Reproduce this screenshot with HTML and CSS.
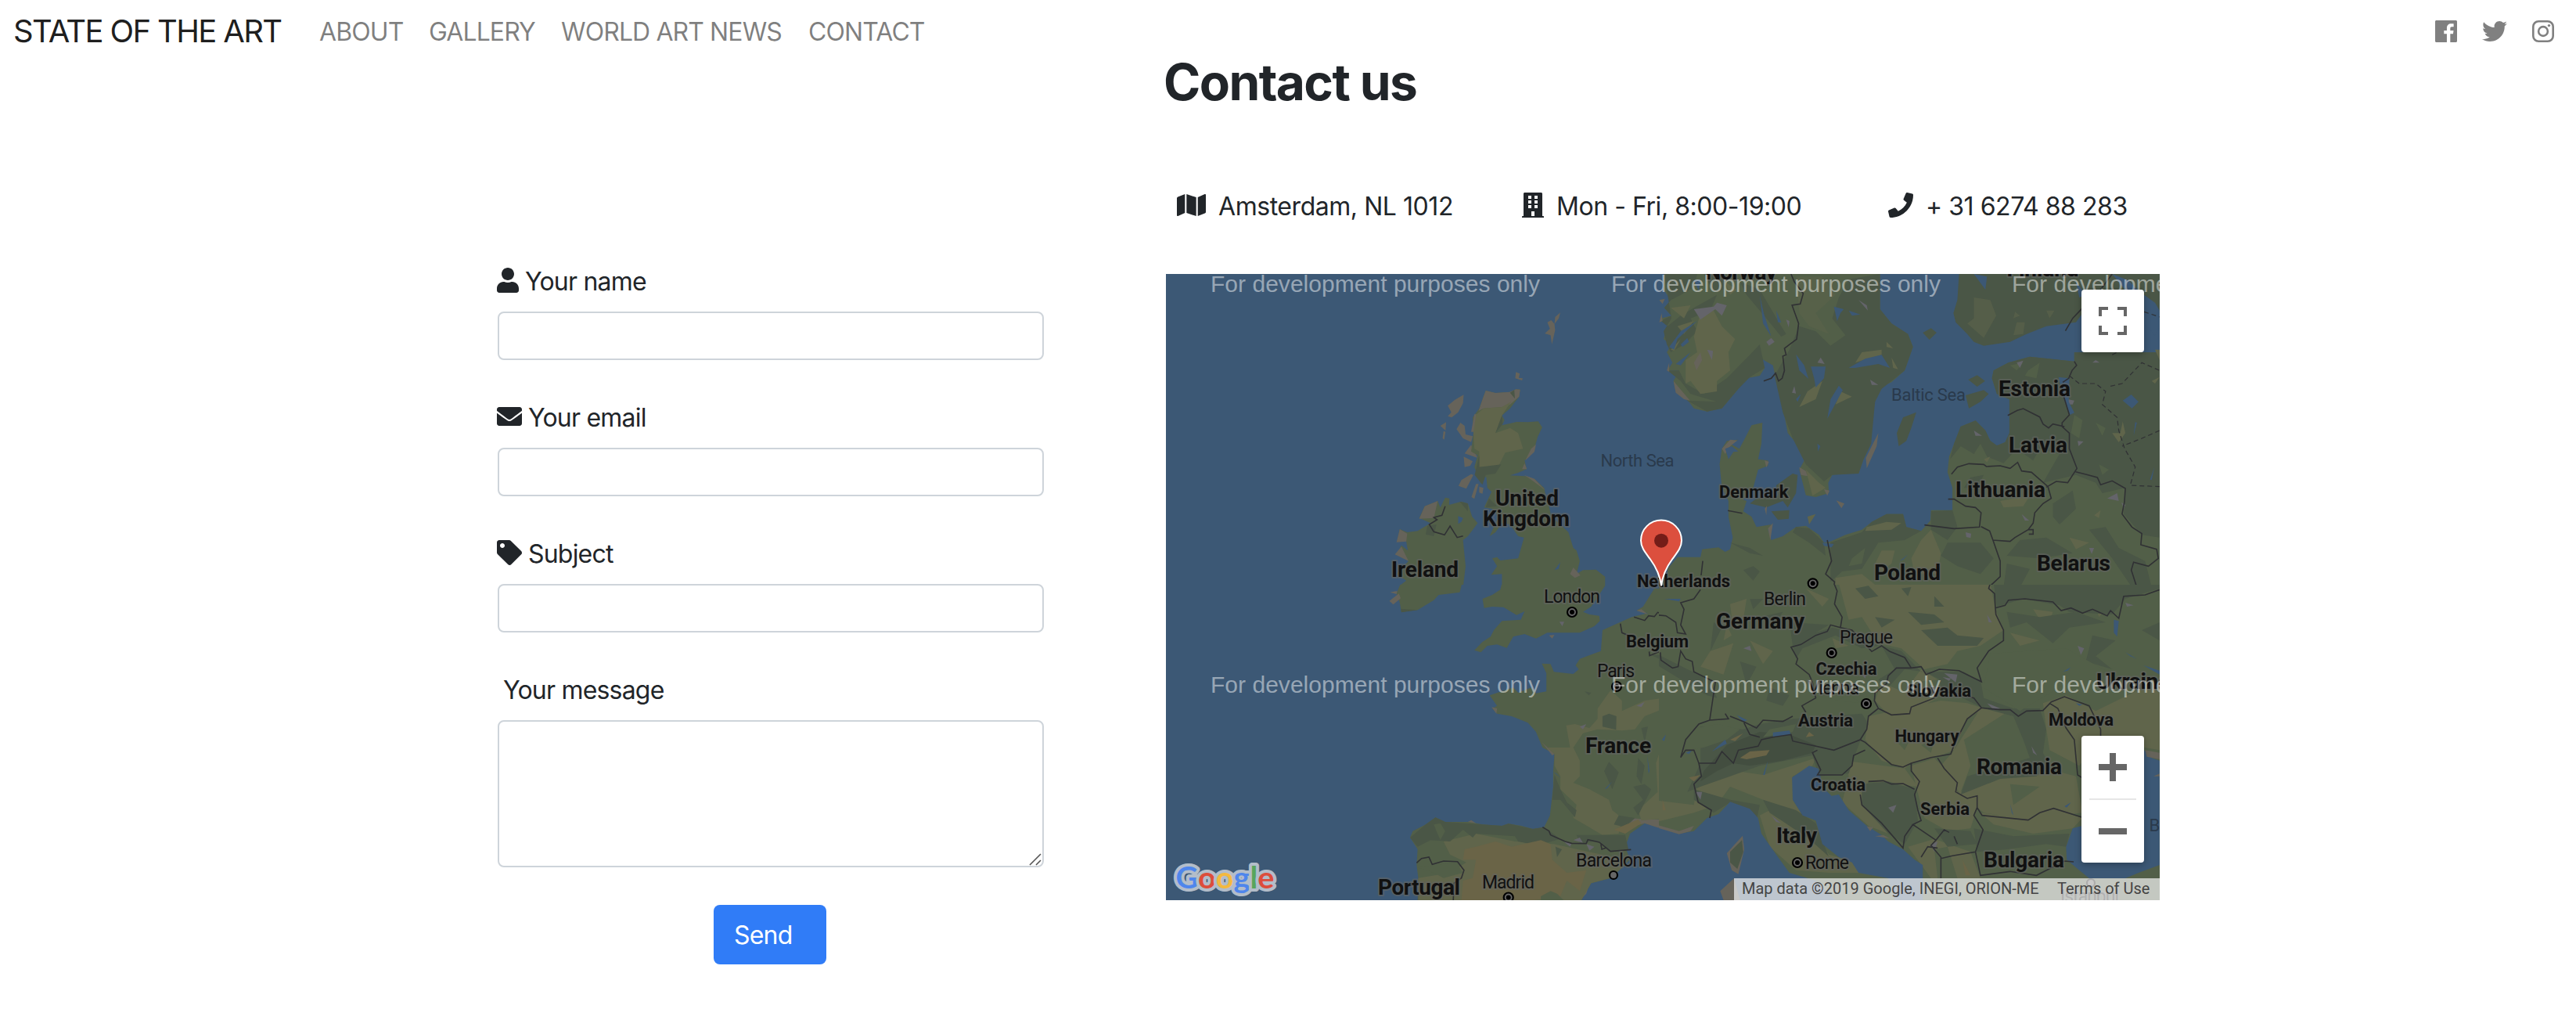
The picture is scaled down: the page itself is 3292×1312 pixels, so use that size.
FILE: index.html
```html
<!DOCTYPE html>
<html lang="en">
<head>
<meta charset="utf-8">
<title>State of the Art - Contact</title>
<link rel="stylesheet" href="styles.css">
</head>
<body>
<nav class="navbar">
  <a class="brand">STATE OF THE ART</a>
  <ul class="nav-links">
    <li class="l-about">ABOUT</li><li class="l-gallery">GALLERY</li><li class="l-news">WORLD ART NEWS</li><li class="l-contact">CONTACT</li>
  </ul>
  <div class="social">
    <svg width="28" height="28" viewBox="0 32 448 448"><path d="M448 56.7v398.5c0 13.7-11.1 24.7-24.7 24.7H309.1V306.5h58.2l8.7-67.6h-67v-43.2c0-19.6 5.4-32.9 33.5-32.9h35.8v-60.5c-6.2-.8-27.4-2.7-52.2-2.7-51.6 0-87 31.5-87 89.4v49.9h-58.4v67.6h58.4V480H24.7C11.1 480 0 468.9 0 455.3V56.7C0 43.1 11.1 32 24.7 32h398.5c13.7 0 24.8 11.1 24.8 24.7z"/></svg>
    <svg width="32" height="32" viewBox="0 0 512 512"><path d="M459.37 151.716c.325 4.548.325 9.097.325 13.645 0 138.72-105.583 298.558-298.558 298.558-59.452 0-114.68-17.219-161.137-47.106 8.447.974 16.568 1.299 25.34 1.299 49.055 0 94.213-16.568 130.274-44.832-46.132-.975-84.792-31.188-98.112-72.772 6.498.974 12.995 1.624 19.818 1.624 9.421 0 18.843-1.3 27.614-3.573-48.081-9.747-84.143-51.98-84.143-102.985v-1.299c13.969 7.797 30.214 12.67 47.431 13.319-28.264-18.843-46.781-51.005-46.781-87.391 0-19.492 5.197-37.36 14.294-52.954 51.655 63.675 129.3 105.258 216.365 109.807-1.624-7.797-2.599-15.918-2.599-24.04 0-57.828 46.782-104.934 104.934-104.934 30.213 0 57.502 12.67 76.67 33.137 23.715-4.548 46.456-13.32 66.599-25.34-7.798 24.366-24.366 44.833-46.132 57.827 21.117-2.273 41.584-8.122 60.426-16.243-14.292 20.791-32.161 39.308-52.628 54.253z"/></svg>
    <svg width="28" height="28" viewBox="0 0 28 28"><rect x="1.3" y="1.3" width="25.4" height="25.4" rx="6.8" class="ring"/><circle cx="14" cy="14" r="5.9" class="ring"/><circle cx="21.5" cy="6.6" r="1.7"/></svg>
  </div>
</nav>
<main class="page">
  <form class="form">
    <div class="field">
      <label><svg width="28" height="32" viewBox="0 0 448 512"><path d="M224 256c70.7 0 128-57.3 128-128S294.7 0 224 0 96 57.3 96 128s57.3 128 128 128zm89.6 32h-16.7c-22.2 10.2-46.9 16-72.9 16s-50.6-5.8-72.9-16h-16.7C60.2 288 0 348.2 0 422.4V464c0 26.5 21.5 48 48 48h352c26.5 0 48-21.5 48-48v-41.6c0-74.2-60.2-134.4-134.4-134.4z"/></svg><span>Your name</span></label>
      <input type="text">
    </div>
    <div class="field">
      <label><svg width="32" height="32" viewBox="0 0 512 512"><path d="M502.3 190.8c3.9-3.1 9.7-.2 9.7 4.7V400c0 26.5-21.5 48-48 48H48c-26.5 0-48-21.5-48-48V195.6c0-5 5.7-7.8 9.7-4.7 22.4 17.4 52.1 39.5 154.1 113.6 21.1 15.4 56.7 47.8 92.2 47.6 35.7.3 72-32.8 92.3-47.6 102-74.1 131.6-96.3 154-113.7zM256 320c23.2.4 56.6-29.2 73.4-41.4 132.7-96.3 142.8-104.7 173.4-128.7 5.8-4.5 9.2-11.5 9.2-18.9v-19c0-26.5-21.5-48-48-48H48c-26.5 0-48 21.5-48 48v19c0 7.4 3.4 14.3 9.2 18.9 30.6 23.9 40.7 32.4 173.4 128.7 16.8 12.2 50.2 41.8 73.4 41.4z"/></svg><span>Your email</span></label>
      <input type="text">
    </div>
    <div class="field">
      <label><svg width="32" height="32" viewBox="0 0 512 512"><path d="M0 252.118V48C0 21.49 21.49 0 48 0h204.118a48 48 0 0 1 33.941 14.059l211.882 211.882c18.745 18.745 18.745 49.137 0 67.882L293.823 497.941c-18.745 18.745-49.137 18.745-67.882 0L14.059 286.059A48 48 0 0 1 0 252.118zM112 64c-26.51 0-48 21.49-48 48s21.49 48 48 48 48-21.49 48-48-21.49-48-48-48z"/></svg><span>Subject</span></label>
      <input type="text">
    </div>
    <div class="field message">
      <label><span>Your message</span></label>
      <div class="area"><textarea></textarea>
        <svg class="grip" width="16" height="16" viewBox="0 0 16 16"><path d="M1 15 15 1M9 15l6-6"/></svg></div>
    </div>
    <button type="button" class="send">Send</button>
  </form>

  <section class="info">
    <h1>Contact us</h1>
    <ul class="facts">
      <li class="f-place"><svg width="37" height="32" viewBox="0 0 576 512" preserveAspectRatio="none"><path d="M0 117.66v346.32c0 11.32 11.43 19.06 21.94 14.86L160 416V32L20.12 87.95A32.006 32.006 0 0 0 0 117.66zM192 416l192 64V96L192 32v384zM554.06 33.16L416 96v384l139.88-55.95A31.996 31.996 0 0 0 576 394.34V48.02c0-11.32-11.43-19.06-21.94-14.86z"/></svg><span>Amsterdam, NL 1012</span></li>
      <li class="f-hours"><svg width="28" height="32" viewBox="0 0 448 512"><path fill-rule="evenodd" d="M436 480h-20V24c0-13.255-10.745-24-24-24H56C42.745 0 32 10.745 32 24v456H12c-6.627 0-12 5.373-12 12v20h448v-20c0-6.627-5.373-12-12-12zM128 64h64v64h-64zM256 64h64v64h-64zM128 160h64v64h-64zM256 160h64v64h-64zM128 256h64v64h-64zM256 256h64v64h-64zM192 384h64v96h-64z"/></svg><span>Mon - Fri, 8:00-19:00</span></li>
      <li class="f-phone"><svg width="32" height="32" viewBox="0 0 512 512"><path d="M493.4 24.6l-104-24c-11.3-2.6-22.9 3.3-27.5 13.9l-48 112c-4.2 9.8-1.4 21.3 6.9 28l60.6 49.6c-36 76.7-98.9 140.5-177.2 177.2l-49.6-60.6c-6.8-8.3-18.2-11.1-28-6.9l-112 48C3.9 366.5-2 378.1.6 389.4l24 104C27.1 504.2 36.7 512 48 512c256.1 0 464-207.5 464-464 0-11.2-7.7-20.9-18.6-23.4z"/></svg><span>+ 31 6274 88 283</span></li>
    </ul>
    <div class="map">
      <svg class="map-canvas" width="1270" height="800" viewBox="1490 350 1270 800">
        <!-- north-west tile -->
        <svg x="1490" y="350" width="630" height="397" viewBox="24.1 30 1519.8 1191" preserveAspectRatio="none">
          <path class="tan" d="M1240 178 1235 200 1222 222 1224 245 1214 300 1210 265 1192 258 1208 240 1200 215 1212 207 1222 222 1224 195ZM1103 406 1115 412 1112 428 1124 430 1122 438 1101 430ZM942 493 940 525 925 560 905 580 893 575 904 560 893 535 915 512ZM888 598 886 630 870 612ZM880 632 886 635 882 665 877 660ZM932 600 945 612 948 645 970 652 965 674 940 660 920 625ZM965 685 985 735 945 718ZM942 730 970 748 962 765 945 770ZM965 797 972 800 950 853 926 842 935 820ZM980 835 988 835 975 892 966 885ZM990 845 1003 850 1000 872 990 868Z"/>
          <path class="green" d="M1010 477 1040 486 1085 482 1103 472 1116 473 1113 500 1085 545 1060 572 1068 590 1060 610 1105 597 1140 598 1172 595 1184 618 1170 655 1160 700 1145 730 1130 745 1136 778 1110 792 1085 802 1130 805 1160 815 1190 850 1195 880 1205 920 1212 960 1240 990 1265 1020 1280 1080 1290 1090 1300 1130 1290 1180 1310 1165 1350 1163 1378 1190 1378 1231 1060 1231 1060 1180 1027 1183 1045 1150 1030 1120 1045 1115 1055 1128 1110 1120 1128 1040 1110 1035 1085 990 1060 985 1040 1020 1022 1035 1035 1000 1050 960 1030 930 1005 925 1028 865 1015 850 1012 810 1000 800 995 835 985 800 975 770 985 725 965 710 972 640 970 580 990 545 1003 500Z"/>
          <path class="tan" d="M1010 477 1040 486 1085 482 1103 472 1116 473 1113 500 1085 530 1060 540 1003 545 988 555 1003 500ZM975 568 995 568 980 600 978 635 965 635ZM1165 683 1160 712 1132 745 1150 700ZM1128 800 1160 815 1195 860 1150 818ZM1280 1155 1302 1185 1285 1195 1270 1180ZM1130 755 1137 778 1122 778Z"/>
          <path class="olive" d="M1003 545 1060 540 1088 520 1060 572 1040 640 1085 620 1110 640 1125 700 1070 715 1050 765 990 770 990 710 975 700 972 640 980 570Z"/>
          <path class="dark" d="M1085 485 1098 475 1100 508ZM1060 572 1062 605 1040 640ZM990 770 1058 760 1040 795 1010 800 1000 838 976 800 990 725ZM1020 890 1045 920 1010 925Z"/>
          <path class="green" d="M885 887 898 890 897 915 935 902 955 910 968 960 985 985 970 1010 955 1035 940 1050 948 1150 940 1231 738 1231 765 1205 735 1180 772 1130 735 1105 750 1070 770 1090 765 1055 737 1055 745 1008 768 1020 800 1015 840 985 805 965 822 920 862 900 870 925Z"/>
          <path class="tan" d="M862 900 850 965 805 968 822 920ZM745 1008 768 1025 765 1055 735 1058ZM750 1075 772 1130 730 1105Z"/>
          <path class="dark" d="M930 902 955 910 955 940ZM830 995 858 990 850 1035 825 1028Z"/>
          <path class="water" d="M925 958 940 965 935 980 925 988ZM1222 1165 1240 1135 1235 1160Z"/>
          <path class="border" d="M885 920 875 955 850 963 860 972 836 990 850 1018 883 1030 900 996 922 1040 940 1034"/>
        </svg>
        <!-- north-east tile -->
        <svg x="2120" y="350" width="640" height="397" viewBox="23.8 30 1520.5 1191" preserveAspectRatio="none">
          <path class="green" d="M40 30 38 90 60 130 40 160 62 190 30 200 50 230 38 280 62 300 48 330 65 370 50 400 85 400 68 440 75 480 115 520 130 545 170 557 215 545 265 470 290 430 330 420 345 390 335 355 370 380 385 470 400 540 415 640 435 670 455 700 465 745 450 780 470 878 500 885 540 870 538 830 550 800 600 790 630 795 645 740 668 680 668 600 680 520 685 470 730 445 770 400 795 310 780 260 730 220 695 165 695 30Z"/>
          <path class="dark" d="M375 420 420 320 450 230 500 250 545 305 590 265 550 200 570 120 600 50 695 30 695 165 730 220 780 260 795 310 770 400 700 470 680 520 668 680 645 740 630 795 550 800 525 825 470 760 430 660 400 560ZM40 30 140 30 130 80 90 110 60 130 40 160 62 190 30 210 50 230 90 190 130 160 200 110 180 170 120 200 140 250 100 300 60 330 48 300 38 250 62 200ZM50 400 85 400 105 450 160 490 230 430 300 340 330 300 345 390 300 425 265 470 215 545 170 557 110 515 200 520 120 490 90 440ZM270 60 330 90 390 220 410 260 395 270 350 200 290 110ZM160 30 230 30 220 90 190 100Z"/>
          <path class="olive" d="M150 180 190 170 215 230 255 280 235 330 240 400 200 440 200 480 150 490 120 440 105 450 105 360 140 330 130 270ZM60 160 120 150 100 200ZM80 230 130 210 100 260ZM90 280 70 325 60 320ZM640 330 700 320 700 340 620 370ZM475 480 520 440 500 510 450 540ZM575 480 610 500 560 530ZM715 290 735 315 715 310ZM730 350 750 395 735 390ZM225 60 260 90 240 110ZM470 780 510 830 530 850 490 880Z"/>
          <path class="olive" opacity=".4" d="M440 40 520 40 560 110 500 180 540 260 480 230 450 180Z"/>
          <path class="tan" d="M68 440 118 515 100 510 75 485ZM25 130 42 125 35 145ZM25 215 32 180 35 210ZM48 400 55 370 55 405ZM130 370 150 330 155 360 138 400ZM450 770 470 785 475 805 455 800ZM525 855 542 860 535 880Z"/>
          <path class="gray" d="M130 165 190 155 200 140 230 150 215 190 195 165 150 205ZM350 290 365 275 375 290 358 305ZM428 485 435 460 440 488ZM505 370 515 350 527 375ZM665 375 680 360 690 375ZM410 205 420 210 418 235ZM630 130 655 150 658 170ZM170 320 188 325 185 360ZM665 435 690 455 670 455Z"/>
          <path class="water" d="M485 385 530 385 525 430 500 465 495 430ZM570 458 582 475 535 585 545 510ZM600 390 650 355 700 340 725 390 690 375 620 390ZM505 680 514 690 507 710ZM440 338 465 380 478 432 450 400ZM330 110 342 180 365 270 340 220ZM555 155 585 165 575 180 565 210ZM455 490 445 520 440 510ZM600 170 635 185 610 190ZM90 300 110 275 115 290 95 310ZM55 310 90 250 140 210 80 280 70 320ZM75 375 120 330 90 380ZM130 55 150 50 145 95ZM380 170 395 215 385 215Z"/>
          <path class="dark" d="M935 30 930 130 918 180 925 215 960 260 980 290 1010 305 1090 290 1140 260 1200 230 1290 215 1310 180 1544 180 1544 30ZM825 255 850 238 867 255 845 282Z"/>
          <path class="olive" opacity=".5" d="M980 120 1030 130 1048 190 1010 275 960 220 980 200ZM1105 175 1120 190 1100 200ZM1200 170 1225 170 1210 200ZM1110 215 1135 215 1130 260 1100 265Z"/>
          <path class="water" d="M1290 60 1320 110 1300 120ZM1497 110 1530 140 1544 170 1544 235 1530 265 1497 220ZM1400 30 1450 55 1480 95 1440 92ZM980 30 1020 40 1015 90Z"/>
          <path class="green" d="M1285 330 1285 365 1150 347 1085 370 1040 400 1035 430 1050 490 1088 510 1088 640 1075 675 1050 688 1030 670 1015 630 985 592 940 615 920 680 905 730 900 790 915 850 915 935 850 935 848 975 820 1015 775 1000 765 950 715 950 670 980 640 1010 590 1030 545 1055 525 1060 510 1030 470 995 440 1000 400 1035 365 1050 355 1010 365 990 320 1000 305 960 280 940 290 900 280 895 310 850 325 780 355 765 355 745 325 740 335 680 338 600 305 610 285 660 268 700 240 680 265 665 230 670 215 700 208 760 215 850 235 900 235 960 248 1040 240 1085 225 1095 205 1078 155 1085 150 1115 80 1115 50 1160 50 1185 24 1200 24 1231 1544 1231 1544 330Z"/>
          <path class="dark" d="M1285 330 1285 365 1150 347 1085 370 1040 400 1035 430 1050 490 1088 510 1088 640 1075 675 1050 688 1030 670 1015 630 985 592 940 615 920 680 908 740 940 690 980 720 1000 680 1020 730 1070 755 1110 700 1160 745 1180 700 1240 720 1190 830 1290 800 1350 830 1370 870 1440 850 1435 950 1490 1030 1544 1040 1544 330ZM670 980 715 950 765 950 775 1000 820 1015 770 1050 690 1060 640 1160 580 1170 545 1210 545 1060 640 1020ZM915 935 930 1000 900 1050 850 1010 850 940ZM240 1060 300 1080 340 1110 300 1100ZM440 1000 480 1005 525 1060 530 1110 480 1060 430 1020ZM280 1165 310 1150 330 1170 310 1205ZM900 1060 1000 1060 1040 1120 1000 1180 930 1150 880 1110ZM1120 1050 1200 1040 1280 1100 1180 1120 1080 1110ZM1220 910 1280 860 1290 930 1240 990 1220 960ZM970 810 1010 800 990 850 950 850ZM1330 1010 1380 1000 1420 1080 1500 1130 1520 1231 1460 1231 1400 1120ZM1080 1140 1150 1160 1120 1231 1070 1231Z"/>
          <path class="green" d="M1090 380 1130 370 1110 400ZM1145 400 1180 370 1170 430 1135 420ZM1285 570 1310 590 1300 660 1275 640ZM1350 600 1380 620 1370 650ZM1360 760 1390 780 1370 800ZM610 1120 650 1080 640 1140 600 1150Z"/>
          <path class="olive" d="M655 1000 715 980 760 985 730 1010 650 1015ZM700 1090 740 1090 730 1140 690 1180 680 1140ZM820 1050 850 1010 880 1100 870 1180 800 1180 790 1120ZM1400 640 1425 640 1432 595 1440 640 1420 675ZM1345 955 1365 935 1360 965ZM1270 1040 1330 1060 1290 1085ZM560 1195 640 1180 690 1231 560 1231ZM1010 740 1030 730 1020 752ZM475 960 500 950 480 990ZM385 850 400 830 430 850 400 880ZM1520 440 1544 425 1530 450ZM1530 320 1544 320 1544 360ZM1060 900 1150 880 1130 920 1070 925Z"/>
          <path class="gray" d="M1385 890 1415 870 1420 900ZM955 1020 972 1025 970 1042 957 1038ZM1110 370 1130 362 1120 390ZM980 630 1005 650 985 650ZM1125 950 1148 975 1135 975ZM1330 1080 1345 1080 1338 1103ZM1265 510 1285 515 1280 530 1262 530ZM1295 670 1313 672 1298 690ZM1340 370 1362 370 1350 360ZM1428 905 1440 915 1435 930Z"/>
          <path class="dark" d="M805 560 790 620 775 670 752 690 746 640 765 580ZM955 495 1010 475 1025 490 1000 520 965 545ZM963 435 990 418 1014 440 990 462ZM380 840 430 795 445 800 440 870 415 925 400 900 350 925 300 910 320 890 385 880ZM365 940 420 935 418 968 385 972Z"/>
          <path class="tan" d="M690 640 685 690 655 775 652 735ZM562 898 587 910 578 928ZM215 700 240 665 262 668 240 690 225 720ZM345 745 358 750 350 772ZM345 930 352 918 350 955ZM355 1005 370 985 362 1050Z"/>
          <path class="water" d="M1237 425 1270 430 1268 520 1285 562 1272 570 1250 500ZM1432 515 1458 492 1480 520 1460 545ZM225 700 245 690 265 710 250 712 235 740ZM520 1060 555 1065 548 1078 525 1072ZM1470 598 1475 600 1465 650ZM1528 770 1520 820 1515 818ZM755 1130 780 1105 765 1125Z"/>
          <path class="border" d="M425 30 435 60 462 105 453 145 428 150 448 220 442 280 405 315 410 340 400 345 405 400 398 430 387 440 378 410 365 430 342 440M1083 572 1112 553 1130 546 1180 578 1190 605 1207 620 1220 605 1255 615M1285 365 1292 380 1278 400 1268 430 1250 445M1253 500 1270 570 1248 600 1248 615 1270 640 1270 700 1293 775 1265 830 1230 825 1200 847M912 797 930 770 965 757 1010 760 1018 768 1060 765 1090 775 1113 752 1125 785 1155 790 1205 845 1215 890 1190 910 1165 945 1160 985 1145 1010 1105 1040 1090 1055 1038 1050M902 893 920 893 955 920 985 925 1002 945 997 1000 920 1006 830 992M1002 998 1028 1015 1038 1050 1060 1130 1060 1190 1025 1231M1289 788 1320 798 1355 810 1365 838 1400 823 1440 852 1437 905 1430 950 1460 1000 1490 1025 1487 1068 1535 1085 1540 1120 1510 1150 1465 1135 1458 1165 1475 1231M535 1050 548 1130 530 1180 557 1210 555 1231M157 1130 152 1185M233 937 277 947M1145 1010 1160 1010 1160 1027 1147 1027M1258 248 1280 200 1310 160M1365 90 1400 30"/>
          <path class="border dashed" d="M1270 420 1300 450 1350 450 1380 480 1370 530 1415 580 1420 630 1438 700 1470 770 1455 840 1544 845M1395 460 1430 450 1490 370 1544 400M1544 630 1490 660 1430 690M1497 175 1544 195M1400 340 1430 320"/>
        </svg>
        <!-- south-west tile -->
        <svg x="1490" y="747" width="630" height="403" viewBox="24.1 6 1519.8 1209" preserveAspectRatio="none">
          <path class="green" d="M1060 0 1055 25 1030 45 1000 60 1005 95 1030 90 1065 92 1105 122 1130 108 1118 140 1060 145 1035 180 1025 205 1000 225 975 257 995 265 1015 240 1045 235 1075 248 1095 205 1130 195 1165 212 1200 190 1250 190 1300 190 1345 165 1362 145 1360 125 1330 120 1310 110 1335 90 1378 10 1378 0ZM748 0 735 40 745 75 750 110 800 103 850 65 865 45 930 35 937 0ZM1570 20 1530 20 1495 90 1475 105 1510 115 1460 130 1370 180 1365 260 1300 290 1287 315 1297 330 1280 348 1220 340 1210 310 1183 308 1197 345 1197 415 1165 422 1150 400 1110 420 1095 400 1022 430 1045 470 1030 480 1045 500 1090 510 1140 535 1165 570 1185 630 1222 655 1218 720 1218 780 1208 890 1190 935 1155 942 1120 930 1080 922 1060 930 1000 925 960 915 885 915 855 898 825 925 785 950 777 975 800 1020 797 1080 802 1130 800 1215 1305 1215 1335 1150 1395 1130 1455 1060 1440 1010 1455 960 1500 920 1540 935 1570 935Z"/>
          <path class="tan" d="M715 35 737 30 735 42ZM713 68 742 40 748 58 725 82ZM1205 200 1222 198 1215 212ZM1028 475 1045 480 1043 500ZM1455 900 1440 940 1500 920 1540 937 1570 935 1570 905 1500 905ZM1183 610 1222 655 1215 660ZM1475 105 1490 100 1510 120ZM955 915 965 908 980 920ZM1330 1150 1320 1190 1300 1215 1310 1160Z"/>
          <path class="olive" d="M1258 545 1285 540 1330 555 1355 520 1355 480 1395 410 1430 450 1430 490 1500 450 1560 440 1560 480 1500 510 1470 560 1430 565 1355 560 1310 575 1280 630 1300 680 1300 740 1280 765 1330 790 1390 830 1400 870 1430 900 1420 960 1370 965 1280 900 1290 850 1240 790 1240 740 1222 700 1222 655 1200 630 1270 630ZM1545 650 1555 700 1570 710 1570 900 1490 910 1480 870 1540 800 1535 690ZM880 990 980 960 1100 990 1220 1000 1440 1060 1440 1080 1395 1130 1335 1150 1305 1215 802 1215 802 1130 900 1110 950 1070 900 1040Z"/>
          <path class="dark" d="M855 898 885 915 1060 930 1080 922 1155 942 1190 935 1240 980 1170 1005 1110 990 1100 970 980 960 970 975 940 945 900 990 840 985 800 1010 777 975 825 925ZM1290 965 1440 965 1450 1020 1390 1028 1360 990 1300 995ZM1222 735 1240 790 1260 840 1290 870 1285 897 1240 830 1215 830ZM1390 685 1420 725 1400 790 1375 720ZM1370 510 1390 500 1413 510 1412 562 1370 550ZM1480 670 1500 700 1490 770 1475 740ZM1500 770 1520 790 1480 890 1465 860 1495 830 1465 780ZM1420 890 1470 900 1440 935 1405 925ZM1490 555 1510 550 1500 610ZM1110 1030 1150 1040 1130 1085 1112 1060ZM1315 415 1335 420 1328 430ZM1515 272 1570 280 1570 305ZM1545 600 1570 560 1570 640ZM748 98 800 103 750 112ZM1225 1010 1245 1020 1230 1050Z"/>
          <path class="brown" d="M980 1010 1040 990 1090 1010 1180 985 1210 1000 1215 1060 1260 1110 1320 1100 1300 1180 1260 1140 1240 1200 1160 1215 935 1215 940 1140 970 1130 980 1060 940 1060 945 1020ZM1405 945 1480 905 1490 920 1440 960Z"/>
          <path class="green" d="M1180 1200 1210 1180 1230 1190 1250 1215 1180 1215ZM850 925 870 920 885 950 870 985 858 950ZM800 1090 860 1080 920 1070 940 1110 880 1130 850 1110Z"/>
          <path class="gray" d="M1280 985 1300 975 1310 995ZM1320 1000 1345 1010 1330 1025ZM1250 990 1275 997 1270 1010ZM1475 470 1500 455 1490 475ZM1300 550 1320 540 1310 560ZM1237 148 1252 148 1246 165Z"/>
          <path class="water" d="M1218 722 1228 730 1242 748ZM1377 790 1400 760 1385 785ZM1508 660 1515 720 1512 730ZM1555 600 1568 575 1568 590Z"/>
          <path class="border" d="M1185 935 1205 950 1210 965 1255 990 1275 997 1320 998 1325 983 1360 993 1395 1028 1458 1021M1365 1000 1368 1020 1380 1015M797 1072 812 1055 835 1050 845 1078 880 1065 923 1067 943 1100 935 1130 912 1150 910 1215M1425 155 1430 190 1450 200M1467 130 1500 143 1512 125 1530 128 1540 112 1570 125M1514 262 1515 278 1545 262 1555 290 1570 305"/>
        </svg>
        <!-- south-east tile -->
        <svg x="2120" y="747" width="640" height="403" viewBox="23.8 6 1520.5 1209" preserveAspectRatio="none">
          <path class="green" d="M0 0H1560V1215H0Z"/>
          <path class="olive" d="M570 0 1030 0 1045 100 1070 180 1000 240 930 260 900 310 830 330 760 250 690 230 640 130 600 140ZM820 330 870 370 790 380ZM700 380 790 430 870 440 780 500 720 505 680 450ZM660 510 880 450 960 460 1010 480 960 520 920 640 860 670 790 690 770 710 700 680 650 600ZM1000 480 1080 495 950 600 970 700 940 800 1000 740 1230 720 1290 740 1310 880 1140 905 1010 880 940 810 880 700 920 640ZM1190 460 1260 430 1350 490 1544 370 1544 640 1360 600 1300 700 1210 640 1200 560ZM790 700 860 672 920 740 930 800 970 820 990 860 970 940 900 950 830 900 805 780ZM1000 880 1150 905 1220 865 1310 900 1280 940 1160 960 1040 925ZM150 700 340 735 500 670 490 700 430 740 430 830 460 890 340 830 240 780 200 850 130 880 0 920 0 830 130 850ZM330 890 360 870 480 920 540 1040 640 1075 630 1110 540 1110 440 1100 360 1010ZM590 680 770 710 810 780 660 760 640 820 720 960 660 930 580 840 600 740ZM240 80 290 60 280 140 250 180ZM180 260 250 230 220 350 150 320ZM300 220 370 260 340 310ZM780 1010 860 980 970 1030 1000 1130 850 1131ZM470 20 540 60 520 90ZM1090 190 1180 220 1120 240ZM1160 100 1220 110 1200 180ZM1340 60 1390 90 1360 130ZM550 210 600 240 560 250ZM230 160 245 200 220 220Z"/>
          <path class="dark" d="M1050 90 1130 60 1240 85 1270 110 1400 120 1440 60 1544 20 1544 0 1040 0ZM1080 110 1180 130 1290 110 1380 150 1270 170 1220 230 1140 150 1090 170ZM820 180 900 170 930 200 1010 210 990 240 870 240ZM700 240 760 260 820 340 950 340 1000 380 990 440 830 340 770 330 720 400 690 370 740 330ZM870 340 1000 370 1010 440 1100 480 1180 480 1200 560 1190 650 1210 700 1170 740 1060 750 940 810 960 740 1150 670 1130 600 1100 510 1010 480 880 400ZM150 550 280 560 330 540 430 520 640 500 660 540 630 620 600 730 510 740 490 660 330 700 240 740 150 780 110 800 150 690ZM640 770 720 760 800 790 810 910 770 1000 720 960 640 850ZM980 940 1100 970 1270 960 1260 1010 1200 1000 1080 1020 990 1030ZM860 940 970 950 990 1000 900 1010ZM430 240 500 190 550 170 610 190 690 240 640 250 560 200 460 250 440 290ZM130 790 240 830 330 850 320 910 240 840 190 880 130 830ZM340 830 440 870 500 920 540 1050 590 1070 550 1060 480 980 360 880ZM300 60 340 60 310 100ZM0 260 110 330 180 370 200 440 170 430 0 300ZM420 150 540 160 500 190 430 240ZM1340 200 1410 220 1350 280 1400 330 1320 300ZM190 150 215 170 180 260ZM1490 180 1544 150 1544 220ZM780 110 860 120 890 150 820 160ZM860 50 890 90 860 90ZM620 20 660 10 690 50 650 60ZM760 20 790 15 780 50ZM330 130 400 110 380 150ZM270 300 320 320 290 390ZM360 400 420 430 400 470 350 450ZM680 130 740 140 700 170Z"/>
          <path class="deep" d="M230 620 330 570 420 580 500 620 490 650 400 680 300 700 250 690 200 720 150 760 160 720Z"/>
          <path class="green" d="M120 560 200 540 270 560 230 600 160 630 100 640ZM360 560 440 540 430 570 340 590ZM560 450 600 430 640 460ZM1030 270 1260 250 1400 350 1240 400 1120 490 1010 400ZM1090 770 1180 780 1100 850ZM860 1020 900 1010 930 1131 870 1131ZM820 620 860 600 850 650ZM740 600 790 590 770 640Z"/>
          <path class="brown" d="M270 670 300 645 360 640 350 660 290 675ZM480 570 495 585 470 590ZM35 830 45 870 35 870ZM240 600 280 575 255 605ZM945 1060 970 1120 955 1120ZM115 745 150 735 130 760Z"/>
          <path class="water" d="M0 925 40 935 85 960 130 950 170 900 205 885 240 838 300 865 325 900 335 960 380 1040 420 1110 500 1140 560 1215 0 1215ZM508 710 480 700 428 745 430 830 460 890 500 910 520 1000 570 1050 610 1070 630 1110 720 1131 740 1215 825 1215 825 1080 800 1060 765 1020 720 990 700 965 655 930 600 870 570 810 548 815 520 780 515 745ZM1280 940 1308 930 1310 640 1497 640 1520 670 1544 680 1544 1080 1480 1110 1440 1131 1330 1131 1290 1090 1262 1060 1260 1010ZM185 645 225 600 230 615ZM260 505 292 525 280 532ZM370 572 420 565 425 582 370 590ZM340 735 355 680 345 735ZM1405 140 1420 145 1415 205 1405 190ZM1495 315 1544 335 1544 350ZM1440 265 1475 290 1455 280ZM1250 340 1275 322 1265 335ZM40 60 90 60 85 70ZM105 650 125 640 115 655ZM33 600 45 580 40 605ZM1255 855 1275 840 1262 860ZM1090 845 1100 890 1095 880ZM1440 540 1465 548ZM1290 460 1310 465 1300 470Z"/>
          <path class="tan" d="M278 968 283 1020 265 1115 245 1100 230 1035 255 1000ZM210 1180 252 1131 270 1215 220 1215ZM0 920 85 950 130 930 120 950 85 962 0 930ZM1500 640 1544 650 1544 675 1505 665ZM655 932 675 935 665 950ZM680 970 705 965 725 978ZM1525 740 1544 730 1544 740Z"/>
          <path class="dark" d="M276 985 280 1030 262 1095 240 1070 240 1030Z"/>
          <path class="gray" d="M280 250 300 240 305 260ZM890 345 930 350 925 380ZM1020 120 1035 150 1025 150ZM1295 240 1315 250 1305 275ZM1020 460 1060 480 1040 485ZM1155 625 1172 660 1160 650ZM720 860 745 850 735 880ZM885 360 910 365 905 375ZM365 890 395 920 380 915ZM640 350 655 340 650 365ZM850 1000 870 990 860 1030ZM135 800 155 800 150 830ZM1440 75 1465 85 1445 90ZM300 130 320 125 315 140Z"/>
          <path class="border" d="M555 0 565 30 557 80 580 130 575 170 545 160 535 185 500 200 455 235 440 240 425 245 445 290 440 310 480 350 490 380 500 440 458 470 470 495M575 170 610 180 640 220 670 262 700 240 725 262 770 285 790 325 745 325 720 355 715 385 680 420 678 450 690 480 660 510 655 560 635 600 555 640 430 605 425 580 370 590 335 600 325 625 265 640 250 690 215 645 195 690 145 690 130 640 105 640 90 668 105 600 145 540 178 525 235 520 225 500M145 690 153 740 130 770 143 840 183 870 178 900M178 525 195 380 130 340 125 300 105 290 90 260 82 320 65 325 30 295 28 265M0 120 45 125 75 150 80 190 105 195 90 160 100 100 90 75 130 60 150 25M282 535 300 580 330 590M240 510 280 530 320 555 340 525 400 530 430 510M790 325 820 320 835 350 875 330 935 335 990 370 1003 378 990 325 1025 260 1070 220 1070 180 1047 120 1045 90 1043 40 1025 20 1030 0M1045 95 1075 85 1085 65 1135 60 1220 72 1245 105 1275 95 1310 115 1340 100 1385 125 1395 105 1420 135 1435 50 1500 45 1544 25M690 480 730 505 785 500 790 475 860 440 870 410 935 425 980 440 1003 478 1060 485 1090 485 1115 510 1140 490 1190 488 1215 455 1255 435 1330 470 1365 560 1365 585M1003 478 960 520 920 620 910 655 850 668 790 690 765 705 730 695 650 610 635 600M650 640 615 660 610 700 580 735 505 735 515 715 490 650 505 640M1210 460 1235 480 1260 555 1285 600 1295 735 1308 745M870 670 890 710 930 765 925 800 960 825 990 815 990 860 1005 890 1145 908 1180 880 1222 863 1308 897M790 690 790 720 815 760 800 810 810 870 820 910 795 925 865 985 850 1005 880 1050 880 1131M660 760 705 757 730 770 765 768 800 790M635 810 640 850 700 920 765 1015 770 970 795 925M990 860 980 890 1008 945 985 1030 915 1045 880 1055M985 1030 1000 1120 1090 1105 1170 1120 1255 1065 1283 1068M820 1050 840 1010 870 1015M865 985 890 945 905 955M920 970 930 1000"/>
        </svg>
        <g class="labels">
          <g class="lg">
            <text x="1911" y="646" textLength="81">United</text><text x="1895" y="672" textLength="111">Kingdom</text><text x="1778" y="737" textLength="86">Ireland</text>
            <text x="2554" y="506" textLength="92">Estonia</text><text x="2567" y="578" textLength="75">Latvia</text><text x="2499" y="635" textLength="115">Lithuania</text><text x="2603" y="729" textLength="94">Belarus</text><text x="2395" y="740.5" textLength="85">Poland</text>
            <text x="2179.5" y="357" textLength="91">Norway</text><text x="2564.6" y="352.5" textLength="92">Finland</text><text x="2026" y="961.6" textLength="84">France</text><text x="1761" y="1143" textLength="105">Portugal</text><text x="2193" y="803" textLength="113">Germany</text>
            <text x="2679" y="880" textLength="94">Ukraine</text><text x="2526" y="988.6" textLength="109">Romania</text><text x="2270" y="1077" textLength="52">Italy</text><text x="2535" y="1108" textLength="103">Bulgaria</text>
          </g>
          <g class="md">
            <text x="2197" y="636" textLength="88.5">Denmark</text><text x="2092" y="750" textLength="119">Netherlands</text><text x="2078" y="826.7" textLength="80">Belgium</text><text x="2320.5" y="861.5" textLength="78">Czechia</text><text x="2437" y="889.5" textLength="82">Slovakia</text><text x="2298" y="927.5" textLength="70">Austria</text><text x="2421.5" y="947.5" textLength="82">Hungary</text><text x="2618" y="926.6" textLength="83">Moldova</text><text x="2314" y="1009.6" textLength="70">Croatia</text><text x="2454" y="1041" textLength="63">Serbia</text>
          </g>
          <g class="city">
            <text x="1973" y="770" textLength="72">London</text><text x="2041" y="864.6" textLength="48">Paris</text><text x="2014" y="1107" textLength="97">Barcelona</text><text x="1894" y="1135" textLength="67">Madrid</text><text x="2254" y="773" textLength="54">Berlin</text><text x="2351" y="822" textLength="68">Prague</text><text x="2311" y="887" textLength="65">Vienna</text><text x="2307" y="1109.6" textLength="56">Rome</text><text x="2633" y="1153" textLength="75">Istanbul</text>
          </g>
          <g class="sea"><text x="2045.5" y="596" textLength="94">North Sea</text><text x="2417" y="512" textLength="95">Baltic Sea</text><text x="2746.5" y="1062">B</text></g>
        </g>
        <g class="dots">
          <g class="dot-rings"><circle cx="2009" cy="782" r="6"/><circle cx="2066" cy="877" r="6"/><circle cx="1927.7" cy="1146.5" r="6"/><circle cx="2316.7" cy="745.3" r="6"/><circle cx="2340.7" cy="834" r="6"/><circle cx="2385" cy="899" r="6"/><circle cx="2297" cy="1102" r="6"/><circle cx="2062" cy="1118" r="5"/><circle cx="2672" cy="1128" r="5"/></g>
          <circle cx="2009" cy="782" r="3"/><circle cx="2066" cy="877" r="3"/><circle cx="1927.7" cy="1146.5" r="3"/><circle cx="2316.7" cy="745.3" r="3"/><circle cx="2340.7" cy="834" r="3"/><circle cx="2385" cy="899" r="3"/><circle cx="2297" cy="1102" r="3"/>
        </g>
        <g class="watermark">
          <text x="1547" y="372.5" textLength="421">For development purposes only</text><text x="2059" y="372.5" textLength="421">For development purposes only</text><text x="2571" y="372.5" textLength="421">For development purposes only</text>
          <text x="1547" y="884.5" textLength="421">For development purposes only</text><text x="2059" y="884.5" textLength="421">For development purposes only</text><text x="2571" y="884.5" textLength="421">For development purposes only</text>
        </g>
        <path class="pin" d="M2123 748.5C2121.500 735 2116 724 2109 714.500C2102 705 2097 699 2097 690.500A26 26 0 0 1 2149 690.500C2149 699 2144 705 2137 714.500C2130 724 2124.500 735 2123 748.500Z"/>
        <circle class="pin-dot" cx="2123" cy="690.700" r="9"/>
        <text class="logo" x="1502.500" y="1135" textLength="126" lengthAdjust="spacingAndGlyphs"><tspan fill="#4f86ec">G</tspan><tspan fill="#dc4d3c">o</tspan><tspan fill="#f3b93f">o</tspan><tspan fill="#4f86ec">g</tspan><tspan fill="#58a55c">l</tspan><tspan fill="#dc4d3c">e</tspan></text>
      </svg>
      <div class="ctl fullscreen"><svg width="36" height="36" viewBox="0 0 36 36"><path d="M2 12V2H12M24 2H34V12M34 24V34H24M12 34H2V24"/></svg></div>
      <div class="ctl zoom">
        <svg width="36" height="36" viewBox="0 0 36 36"><path d="M0 18H36M18 0V36"/></svg>
        <i></i>
        <svg width="36" height="36" viewBox="0 0 36 36"><path d="M0 18H36"/></svg>
      </div>
      <div class="attribution"><span class="data">Map data ©2019 Google, INEGI, ORION-ME</span><span>Terms of Use</span></div>
    </div>
  </section>
</main>
</body>
</html>
```

FILE: styles.css
```css
* { box-sizing: border-box; }
body { margin: 0; background: #fff; color: #212529; font-family: Inter, "Liberation Sans", sans-serif; font-size: 32px; line-height: 48px; letter-spacing: -0.8px; }
ul { list-style: none; margin: 0; padding: 0; }
svg { display: block; flex: none; }

.navbar { height: 80px; padding: 0 28px 0 17px; display: flex; align-items: center; white-space: nowrap; }
.brand { width: 391px; font-size: 40px; color: rgba(0,0,0,.9); letter-spacing: -1.65px; }
.nav-links { display: flex; flex: 1; color: rgba(0,0,0,.5); padding-top: 1px; letter-spacing: -.9px; }
.l-about { width: 140px; }
.l-gallery { width: 169px; }
.l-news { width: 316px; }
.social { display: flex; align-items: center; gap: 32px; fill: #808080; }
.ring { fill: none; stroke: #808080; stroke-width: 2.6; }

.page { display: flex; gap: 156px; padding-left: 636px; }
.form { width: 698px; padding-top: 254px; fill: #212529; }
.field { margin-bottom: 48px; }
.field label { display: flex; align-items: center; gap: 8px; height: 48px; margin: 0 0 16px -1px; }
.field label span { padding-top: 3px; }
.field input { display: block; width: 100%; height: 62px; border: 2px solid #ced4da; border-radius: 8px; background: #fff; padding: 0 24px; }
.message label { padding-left: 8px; }
.area { position: relative; }
.area textarea { display: block; width: 100%; height: 188px; border: 2px solid #ced4da; border-radius: 8px; resize: none; }
.grip { position: absolute; right: 3px; bottom: 2px; fill: none; stroke: #555; stroke-width: 1.6; }
.send { display: block; width: 144px; height: 76px; margin: 0 0 0 276px; border: 0; border-radius: 8px; background: #307cf7; color: #fff; font: inherit; letter-spacing: -.8px; text-align: left; padding: 1px 0 0 26px; }

.info { width: 1270px; }
h1 { margin: -14px 0 0 -3px; font-size: 64px; line-height: 77px; font-weight: 700; height: 158px; letter-spacing: -1.6px; }
.facts { display: flex; height: 76px; align-items: center; white-space: nowrap; padding-left: 14px; letter-spacing: -.45px; fill: #212529; }
.facts li { display: flex; align-items: center; gap: 16px; }
.facts span { padding-top: 3px; }
.f-place { width: 441px; }
.f-hours { width: 468px; }
.map { position: relative; width: 1270px; height: 800px; margin-top: 50px; background: #3c5875; overflow: hidden; font-family: Roboto, sans-serif; letter-spacing: 0; }
.map-canvas { fill: #000; }

.green { fill: #525f48; }
.dark { fill: #4a5646; }
.deep { fill: #434e40; }
.olive { fill: #60654b; }
.brown { fill: #6a6447; }
.tan { fill: #66635a; }
.gray { fill: #64646a; }
.water { fill: #3c5875; }
.border { fill: none; stroke: #303134; stroke-width: 1.6; vector-effect: non-scaling-stroke; }
.dashed { stroke-dasharray: 6 4; stroke-width: 1.2; }
.labels text { fill: #111; stroke: rgba(98,100,98,.6); stroke-width: 4px; stroke-linejoin: round; paint-order: stroke; }
.lg { font-size: 28px; font-weight: 700; }
.md { font-size: 22px; font-weight: 700; }
.city { font-size: 23px; }
.sea { font-size: 22px; }
.labels .sea text { fill: #2a3a4c; stroke: none; }
.dot-rings { fill: #666; stroke: #000; stroke-width: 2.2; }
.watermark { font-family: "Liberation Sans", Arial, sans-serif; font-size: 30px; fill: rgba(255,255,255,.48); }
.pin { fill: #dc4f3e; stroke: #fff; stroke-width: 2; }
.pin-dot { fill: #741d18; }
.logo { font-family: Lato, sans-serif; font-weight: 700; font-size: 39px; stroke: #b3bdc9; stroke-width: 8px; stroke-linejoin: round; paint-order: stroke; }

.ctl { position: absolute; right: 20px; width: 80px; background: #fff; border-radius: 4px; box-shadow: 0 2px 8px rgba(0,0,0,.3); display: flex; flex-direction: column; align-items: center; justify-content: space-between; fill: none; stroke: #666; }
.fullscreen { top: 20px; height: 80px; padding: 22px 0; stroke-width: 4; }
.zoom { bottom: 48px; height: 162px; padding: 22px 0; stroke-width: 8; }
.zoom i { width: 60px; height: 2px; background: #e6e6e6; }
.attribution { position: absolute; right: 0; bottom: 0; height: 28px; width: 544px; padding: 0 0 2px 10px; background: rgba(245,245,245,.7); color: #444; font-size: 20px; line-height: 26px; white-space: nowrap; display: flex; gap: 25px; }
.data { width: 378px; }
```
